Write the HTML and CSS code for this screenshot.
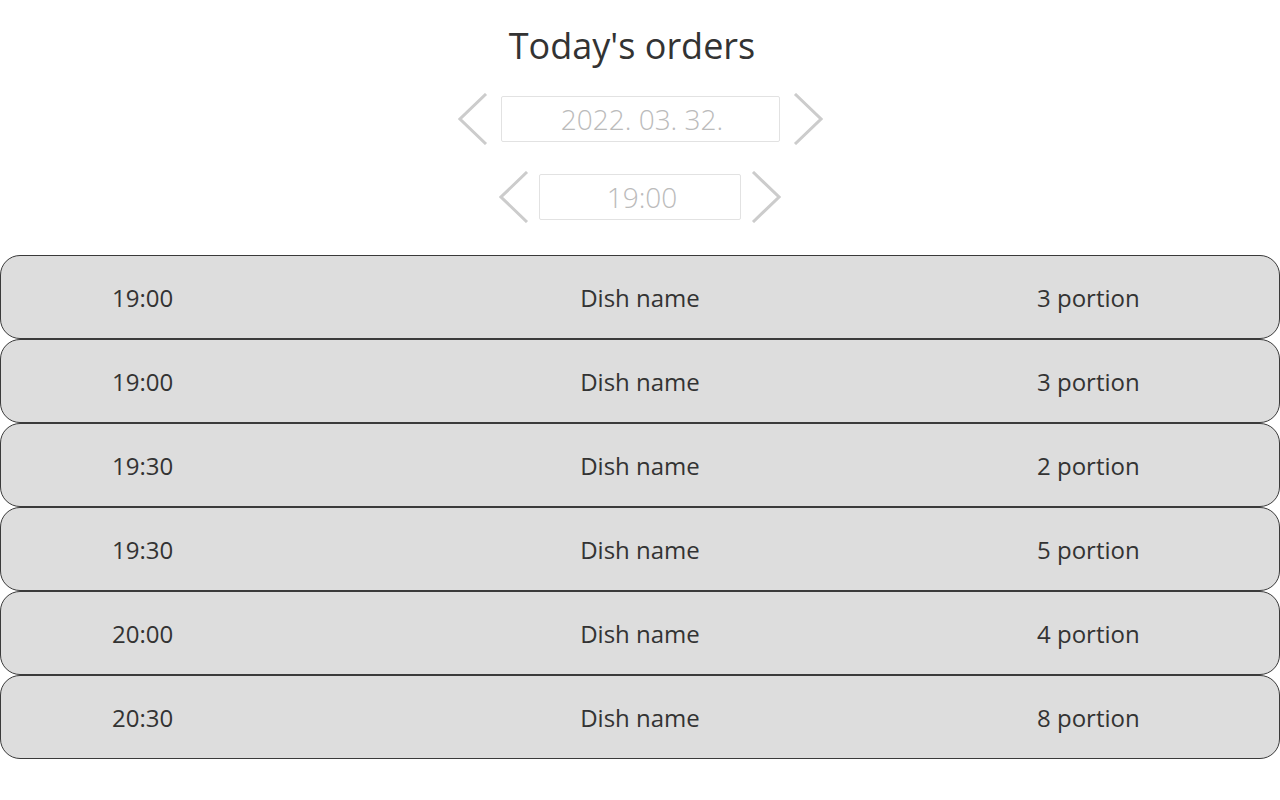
FILE: index.html
```
<!DOCTYPE html>
<html>
<head>
<meta charset="utf-8">
<link rel="stylesheet" href="styles.css">
</head>
<body>
<h1 class="title">Today's orders</h1>
<div class="picker picker-date">
  <svg class="chev" width="30" height="52" viewBox="0 0 30 52"><polyline points="28,1 2,26 28,51" fill="none" stroke="#cccccc" stroke-width="3"/></svg>
  <div class="field field-date">2022. 03. 32.</div>
  <svg class="chev" width="30" height="52" viewBox="0 0 30 52"><polyline points="2,1 28,26 2,51" fill="none" stroke="#cccccc" stroke-width="3"/></svg>
</div>
<div class="picker picker-time">
  <svg class="chev" width="30" height="52" viewBox="0 0 30 52"><polyline points="28,1 2,26 28,51" fill="none" stroke="#cccccc" stroke-width="3"/></svg>
  <div class="field field-time">19:00</div>
  <svg class="chev" width="30" height="52" viewBox="0 0 30 52"><polyline points="2,1 28,26 2,51" fill="none" stroke="#cccccc" stroke-width="3"/></svg>
</div>
<div class="orders">
  <div class="order"><span class="c-time">19:00</span><span class="c-dish">Dish name</span><span class="c-qty">3 portion</span></div>
  <div class="order"><span class="c-time">19:00</span><span class="c-dish">Dish name</span><span class="c-qty">3 portion</span></div>
  <div class="order"><span class="c-time">19:30</span><span class="c-dish">Dish name</span><span class="c-qty">2 portion</span></div>
  <div class="order"><span class="c-time">19:30</span><span class="c-dish">Dish name</span><span class="c-qty">5 portion</span></div>
  <div class="order"><span class="c-time">20:00</span><span class="c-dish">Dish name</span><span class="c-qty">4 portion</span></div>
  <div class="order"><span class="c-time">20:30</span><span class="c-dish">Dish name</span><span class="c-qty">8 portion</span></div>
</div>
</body>
</html>
```
FILE: styles.css
```
html, body {
  margin: 0;
  padding: 0;
  background: #ffffff;
}
body {
  font-family: "Open Sans", "Noto Sans", sans-serif;
  color: #333333;
}
.title {
  margin: 21px 0 0 0;
  height: 50px;
  line-height: 50px;
  font-size: 36px;
  font-weight: 400;
  text-align: center;
  color: #333333;
  padding-right: 16px;
}
.picker {
  display: flex;
  justify-content: center;
  align-items: center;
}
.picker-date {
  margin-top: 22px;
  height: 52px;
  gap: 13px;
}
.picker-time {
  margin-top: 26px;
  height: 52px;
  gap: 10px;
}
.chev {
  display: block;
  flex: none;
}
.field {
  box-sizing: border-box;
  height: 46px;
  border: 1px solid #e2e2e2;
  border-radius: 2px;
  color: #bbbbbb;
  font-size: 28px;
  font-weight: 300;
  line-height: 44px;
  text-align: center;
  padding-left: 4px;
}
.field-date {
  width: 279px;
}
.field-time {
  width: 202px;
}
.orders {
  margin-top: 32px;
  display: flex;
  flex-direction: column;
}
.order {
  box-sizing: border-box;
  height: 84px;
  background: #dddddd;
  border: 1px solid #3a3a3a;
  border-radius: 20px;
  display: grid;
  grid-template-columns: 400px 1fr 400px;
  align-items: center;
  font-size: 24px;
  color: #333333;
}
.c-time {
  padding-left: 111px;
}
.c-dish {
  text-align: center;
}
.c-qty {
  padding-left: 158px;
}
```
